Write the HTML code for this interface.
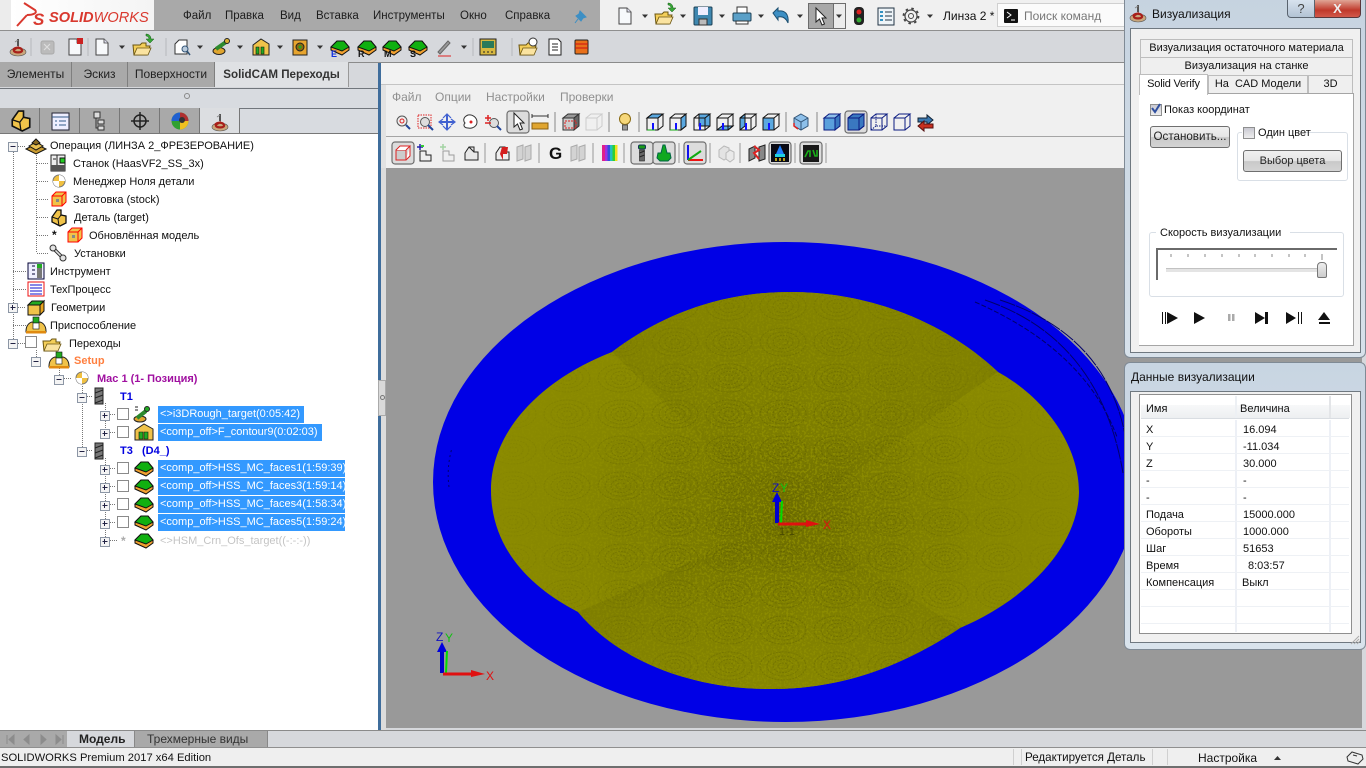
<!DOCTYPE html>
<html><head><meta charset="utf-8"><style>
html,body{margin:0;padding:0;width:1366px;height:768px;overflow:hidden;background:#d6d8dc}
*{box-sizing:border-box}
body{font-family:"Liberation Sans","Noto Sans CJK SC",sans-serif;font-size:11px;color:#111;position:relative}
.b{position:absolute}
.t{position:absolute;white-space:nowrap;line-height:14px;font-size:11px}
.m{font-size:11.5px;color:#1c1c1c}
.g{color:#8f8f8f;font-size:12px}
.hl{position:absolute;background:#3399ff;color:#fff;height:17px;line-height:17px;padding-left:2px;white-space:nowrap;font-size:11px}
.tab{position:absolute;background:#a9a9a9;border-right:1px solid #7f7f7f;top:62px;height:25px;line-height:25px;text-align:center;font-size:12px;color:#222}
.ft{position:absolute;top:108px;height:25px;width:40px;background:#a9a9a9;border-right:1px solid #777}
.btn{position:absolute;border:1px solid #6f6f6f;border-radius:3px;background:linear-gradient(#f0f0f0,#e6e6e6 48%,#c9c9c9 52%,#d4d4d4);text-align:center;font-size:11px;color:#222}
.ptab{position:absolute;background:#efefef;border:1px solid #bdbdbd;border-bottom:0;text-align:center;font-size:11px;white-space:nowrap;color:#111}
.r{position:absolute;left:1141px;width:208px;height:1px;background:#eef1f5}
#ov{position:absolute;left:0;top:0;z-index:20}
.tt{z-index:21}
</style></head><body>

<!-- top menu band -->
<div class="b" style="left:0;top:0;width:600px;height:31px;background:#a9a9a9"></div>
<div class="b" style="left:0;top:0;width:11px;height:31px;background:#ececec"></div>
<div class="b" style="left:11px;top:0;width:143px;height:31px;background:linear-gradient(90deg,#fff,#f4f4f4)"></div>
<div class="b" style="left:600px;top:0;width:530px;height:30px;background:#f0f0f0"></div>
<div class="b" style="left:0;top:30px;width:1366px;height:1px;background:#8f8f8f"></div>
<div class="b" style="left:0;top:31px;width:1366px;height:31px;background:#d6d8dc"></div>
<div class="b" style="left:0;top:62px;width:1366px;height:1px;background:#8b8b8b"></div>

<div class="t" style="left:49px;top:10px;font-size:14.6px;font-weight:bold;font-style:italic;color:#d9382e;line-height:17px;z-index:21">SOLID<span style="font-weight:normal">WORKS</span></div>
<div class="t m" style="left:183px;top:9px">Файл</div>
<div class="t m" style="left:225px;top:9px">Правка</div>
<div class="t m" style="left:280px;top:9px">Вид</div>
<div class="t m" style="left:316px;top:9px">Вставка</div>
<div class="t m" style="left:373px;top:9px">Инструменты</div>
<div class="t m" style="left:460px;top:9px">Окно</div>
<div class="t m" style="left:505px;top:9px">Справка</div>
<div class="t" style="left:943px;top:9px;color:#111;font-size:12px">Линза 2 *</div>
<div class="b" style="left:997px;top:3px;width:130px;height:24px;background:#fbfbfb;border:1px solid #d0d0d0"></div>
<div class="t" style="left:1024px;top:9px;color:#777;font-size:12px">Поиск команд</div>
<div class="b" style="left:808px;top:3px;width:26px;height:26px;background:#a8a8a8;border:1px solid #6c6c6c"></div>
<div class="b" style="left:834px;top:3px;width:12px;height:26px;background:#ececec;border:1px solid #6c6c6c;border-left:0"></div>

<!-- left panel -->
<div class="b" style="left:0;top:63px;width:378px;height:25px;background:#d6d8dc"></div>
<div class="tab" style="left:0;width:72px">Элементы</div>
<div class="tab" style="left:72px;width:56px">Эскиз</div>
<div class="tab" style="left:128px;width:87px">Поверхности</div>
<div class="tab" style="left:215px;width:134px;background:#dfe1e4;font-weight:bold;color:#333;border-right:1px solid #999;font-size:11.6px">SolidCAM Переходы</div>
<div class="b" style="left:0;top:88px;width:378px;height:1px;background:#71767c"></div>
<div class="b" style="left:0;top:89px;width:378px;height:19px;background:#d8dbe0"></div>
<div class="b" style="left:184px;top:93px;width:6px;height:6px;border:1px solid #888;border-radius:50%"></div>
<div class="b" style="left:0;top:108px;width:378px;height:1px;background:#71767c"></div>
<div class="b" style="left:0;top:109px;width:378px;height:24px;background:#d8dbe0"></div>
<div class="ft" style="left:0"></div><div class="ft" style="left:40px"></div><div class="ft" style="left:80px"></div><div class="ft" style="left:120px"></div><div class="ft" style="left:160px"></div>
<div class="ft" style="left:200px;background:#dcdee1"></div>
<div class="b" style="left:0;top:133px;width:378px;height:597px;background:#fff;border-top:1px solid #777"></div>
<div class="b" style="left:378px;top:63px;width:3px;height:667px;background:#3f6d9c"></div>
<div class="b" style="left:378px;top:380px;width:8px;height:36px;background:#d9d9d9;border:1px solid #aaa;z-index:5"></div>
<div class="b" style="left:380px;top:395px;width:5px;height:5px;border:1px solid #777;border-radius:50%;z-index:6"></div>

<!-- view toolbar -->
<div class="b" style="left:381px;top:63px;width:985px;height:22px;background:#f2f2f2;border-bottom:1px solid #c4c4c4"></div>
<div class="b" style="left:381px;top:85px;width:985px;height:83px;background:#f0f0f0;border-left:5px solid #e2e2e2"></div>
<div class="b" style="left:386px;top:136px;width:980px;height:1px;background:#a5a5a5"></div>
<div class="t g" style="left:392px;top:90px">Файл</div>
<div class="t g" style="left:435px;top:90px">Опции</div>
<div class="t g" style="left:486px;top:90px">Настройки</div>
<div class="t g" style="left:560px;top:90px">Проверки</div>

<!-- canvas -->
<div class="b" style="left:381px;top:168px;width:985px;height:577px;background:#d6d8dc;border-left:5px solid #dcdcdc"></div>
<svg class="b" style="left:386px;top:168px" width="976" height="560" viewBox="386 168 976 560">
<defs>
<radialGradient id="y1" gradientUnits="userSpaceOnUse" cx="785" cy="515" r="300" gradientTransform="translate(785 515) scale(1 .72) translate(-785 -515)">
<stop offset="0" stop-color="#6e6e00"/><stop offset=".3" stop-color="#7a7a00"/><stop offset=".7" stop-color="#868600"/><stop offset="1" stop-color="#8b8b00"/></radialGradient>
<linearGradient id="y2" gradientUnits="userSpaceOnUse" x1="0" y1="292" x2="0" y2="520"><stop offset="0" stop-color="#848400"/><stop offset=".6" stop-color="#7d7d00"/><stop offset="1" stop-color="#6c6c00"/></linearGradient>
<linearGradient id="y3" gradientUnits="userSpaceOnUse" x1="0" y1="520" x2="0" y2="689"><stop offset="0" stop-color="#6c6c00"/><stop offset=".4" stop-color="#7c7c00"/><stop offset="1" stop-color="#868600"/></linearGradient>
<radialGradient id="fade" gradientUnits="userSpaceOnUse" cx="785" cy="515" r="300"><stop offset="0" stop-color="#fff" stop-opacity="1"/><stop offset=".55" stop-color="#fff" stop-opacity=".5"/><stop offset="1" stop-color="#fff" stop-opacity=".08"/></radialGradient>
<mask id="mk" maskUnits="userSpaceOnUse" x="486" y="288" width="600" height="405"><rect x="486" y="288" width="600" height="405" fill="url(#fade)"/></mask>
<clipPath id="yc"><path d="M612 352C665 312 725 292 790 292C870 292 945 322 998 372C1045 398 1079 445 1079 492C1078 545 1030 598 960 628C900 668 840 689 770 689C690 689 618 660 578 612C520 582 491 540 491 490C491 432 540 380 612 352Z"/></clipPath>
<pattern id="ros" patternUnits="userSpaceOnUse" width="54" height="36"><g fill="none" stroke="#5c5c00" stroke-width="1" stroke-dasharray="2 1"><ellipse cx="27" cy="18" rx="5" ry="3"/><ellipse cx="27" cy="18" rx="10" ry="6.500"/><ellipse cx="27" cy="18" rx="16" ry="10"/><ellipse cx="27" cy="18" rx="23" ry="14"/></g></pattern>
<filter id="nz" x="0" y="0" width="100%" height="100%"><feTurbulence type="fractalNoise" baseFrequency=".45" numOctaves="2" seed="4"/><feColorMatrix values="0 0 0 0 .36 0 0 0 0 .36 0 0 0 0 0 0 0 0 7 -3.400"/></filter>
</defs>
<rect x="386" y="168" width="976" height="560" fill="#999"/>
<ellipse cx="785.500" cy="482" rx="352.500" ry="240" fill="#0000e6"/>
<g fill="none" stroke="#00006a" stroke-width="1" stroke-dasharray="16 1">
<path d="M985 300Q1100 339 1123 473"/><path d="M1000 300Q1108 335 1126 440"/><path d="M975 302Q1085 350 1117 437" stroke-dasharray="5 2"/>
<path d="M449 487C447 472 449 458 452 448" stroke-dasharray="2 3"/>
</g>
<path d="M612 352C665 312 725 292 790 292C870 292 945 322 998 372C1045 398 1079 445 1079 492C1078 545 1030 598 960 628C900 668 840 689 770 689C690 689 618 660 578 612C520 582 491 540 491 490C491 432 540 380 612 352Z" fill="url(#y1)"/>
<path d="M612 352C665 312 725 292 790 292C870 292 945 322 998 372L785 520Z" fill="url(#y2)"/>
<path d="M578 612C618 660 690 689 770 689C840 689 900 668 960 628L785 520Z" fill="url(#y3)"/>
<g clip-path="url(#yc)"><g mask="url(#mk)"><rect x="486" y="288" width="600" height="405" filter="url(#nz)" opacity=".55"/><rect x="486" y="288" width="600" height="405" fill="url(#ros)" opacity=".65"/></g></g>
</svg>

<!-- bottom -->
<div class="b" style="left:0;top:730px;width:1366px;height:1px;background:#8a8a8a"></div>
<div class="b" style="left:0;top:731px;width:1366px;height:16px;background:#d6d8dc"></div>
<div class="b" style="left:0;top:731px;width:67px;height:16px;background:#a9a9a9"></div>
<div class="t" style="left:79px;top:732px;font-size:12px;font-weight:bold;color:#222">Модель</div>
<div class="b" style="left:134px;top:731px;width:134px;height:16px;background:#a9a9a9;border-left:1px solid #888;border-right:1px solid #888"></div>
<div class="t" style="left:147px;top:732px;font-size:12px;color:#333">Трехмерные виды</div>
<div class="b" style="left:0;top:747px;width:1366px;height:1px;background:#8f8f8f"></div>
<div class="b" style="left:0;top:748px;width:1366px;height:18px;background:#efefef"></div>
<div class="b" style="left:0;top:766px;width:1366px;height:2px;background:#6e6e6e"></div>
<div class="t" style="left:1px;top:751px;font-size:11.2px">SOLIDWORKS Premium 2017 x64 Edition</div>
<div class="t" style="left:1025px;top:751px;font-size:11.6px">Редактируется Деталь</div>
<div class="t" style="left:1198px;top:751px;font-size:12px">Настройка</div>
<div class="b" style="left:1013px;top:749px;width:1px;height:16px;background:#d0d0d0"></div>
<div class="b" style="left:1021px;top:749px;width:1px;height:16px;background:#d0d0d0"></div>
<div class="b" style="left:1152px;top:749px;width:1px;height:16px;background:#d0d0d0"></div>
<div class="b" style="left:1167px;top:749px;width:1px;height:16px;background:#d0d0d0"></div>

<!-- tree text -->
<div class="t" style="left:50px;top:139px">Операция (ЛИНЗА 2_ФРЕЗЕРОВАНИЕ)</div>
<div class="t" style="left:73px;top:157px">Станок (HaasVF2_SS_3x)</div>
<div class="t" style="left:73px;top:175px">Менеджер Ноля детали</div>
<div class="t" style="left:73px;top:193px">Заготовка (stock)</div>
<div class="t" style="left:74px;top:211px">Деталь (target)</div>
<div class="t" style="left:89px;top:229px">Обновлённая модель</div>
<div class="t" style="left:52px;top:228px;font-weight:bold;font-size:12px">*</div>
<div class="t" style="left:74px;top:247px">Установки</div>
<div class="t" style="left:50px;top:265px">Инструмент</div>
<div class="t" style="left:50px;top:283px">ТехПроцесс</div>
<div class="t" style="left:51px;top:301px">Геометрии</div>
<div class="t" style="left:50px;top:319px">Приспособление</div>
<div class="t" style="left:69px;top:337px">Переходы</div>
<div class="t" style="left:74px;top:354px;font-weight:bold;color:#ff7f3f">Setup</div>
<div class="t" style="left:97px;top:372px;font-weight:bold;color:#a010a0">Mac 1 (1- Позиция)</div>
<div class="t" style="left:120px;top:390px;font-weight:bold;color:#0000e0">T1</div>
<div class="t" style="left:120px;top:444px;font-weight:bold;color:#0000e0">T3&nbsp;&nbsp;&nbsp;(D4_)</div>
<div class="hl" style="left:158px;top:406px;width:146px">&lt;&gt;i3DRough_target(0:05:42)</div>
<div class="hl" style="left:158px;top:424px;width:164px">&lt;comp_off&gt;F_contour9(0:02:03)</div>
<div class="hl" style="left:158px;top:460px;width:187px">&lt;comp_off&gt;HSS_MC_faces1(1:59:39)</div>
<div class="hl" style="left:158px;top:478px;width:187px">&lt;comp_off&gt;HSS_MC_faces3(1:59:14)</div>
<div class="hl" style="left:158px;top:496px;width:187px">&lt;comp_off&gt;HSS_MC_faces4(1:58:34)</div>
<div class="hl" style="left:158px;top:514px;width:187px">&lt;comp_off&gt;HSS_MC_faces5(1:59:24)</div>
<div class="t" style="left:160px;top:534px;color:#c4c4c4">&lt;&gt;HSM_Crn_Ofs_target((-:-:-))</div>
<div class="t" style="left:121px;top:534px;color:#aaa;font-weight:bold;font-size:12px">*</div>

<!-- window 1 -->
<div class="b" style="left:1124px;top:-6px;width:242px;height:364px;background:linear-gradient(#c6d3e0,#d7e1ea);border:1px solid #7f8a95;border-radius:6px;z-index:10"></div>
<div class="b" style="left:1130px;top:28px;width:231px;height:325px;background:#f0f0f0;border:1px solid #6f7880;z-index:10"></div>
<div class="b" style="left:1139px;top:93px;width:215px;height:253px;background:#fff;border:1px solid #a5a5a5;border-left:0;z-index:10"></div>
<div class="t tt" style="left:1152px;top:7px;font-size:12px">Визуализация</div>
<div class="b" style="left:1287px;top:0;width:28px;height:18px;background:linear-gradient(#d7e2ee,#b3c3d4);border:1px solid #59636e;border-top:0;border-radius:0 0 0 4px;z-index:11;text-align:center;font-size:13px;color:#444;line-height:17px">?</div>
<div class="b" style="left:1315px;top:0;width:46px;height:18px;background:linear-gradient(#e0a595,#c0392b 60%,#d2584a);border:1px solid #59363a;border-top:0;border-left:0;border-radius:0 0 4px 0;z-index:11;text-align:center;font-size:13px;font-weight:bold;color:#eee;line-height:17px">X</div>
<div class="ptab" style="left:1140px;top:39px;width:213px;height:18px;line-height:16px;z-index:11">Визуализация остаточного материала</div>
<div class="ptab" style="left:1140px;top:57px;width:213px;height:18px;line-height:16px;z-index:11">Визуализация на станке</div>
<div class="ptab" style="left:1208px;top:75px;width:100px;height:18px;line-height:16px;z-index:11">На&nbsp; CAD Модели</div>
<div class="ptab" style="left:1308px;top:75px;width:45px;height:18px;line-height:16px;z-index:11">3D</div>
<div class="ptab" style="left:1139px;top:74px;width:69px;height:21px;line-height:18px;background:#fff;z-index:12;letter-spacing:-.2px">Solid Verify</div>
<div class="b" style="left:1150px;top:104px;width:12px;height:12px;background:linear-gradient(#c9c9d2,#eee);border:1px solid #8e8f8f;z-index:11"></div>
<div class="t tt" style="left:1164px;top:103px">Показ координат</div>
<div class="btn" style="left:1150px;top:126px;width:80px;height:22px;line-height:20px;z-index:11;font-size:11.6px">Остановить...</div>
<div class="b" style="left:1237px;top:132px;width:111px;height:49px;border:1px solid #d9dfe6;border-radius:3px;z-index:11"></div>
<div class="b" style="left:1242px;top:128px;width:64px;height:12px;background:#fff;z-index:11"></div>
<div class="b" style="left:1243px;top:127px;width:12px;height:12px;background:linear-gradient(#c9c9d2,#eee);border:1px solid #8e8f8f;z-index:12"></div>
<div class="t tt" style="left:1258px;top:126px">Один цвет</div>
<div class="btn" style="left:1243px;top:150px;width:99px;height:22px;line-height:20px;z-index:11">Выбор цвета</div>
<div class="b" style="left:1149px;top:232px;width:195px;height:65px;border:1px solid #d9dfe6;border-radius:3px;z-index:11"></div>
<div class="b" style="left:1156px;top:226px;width:134px;height:12px;background:#fff;z-index:11"></div>
<div class="t tt" style="left:1160px;top:226px">Скорость визуализации</div>
<div class="b" style="left:1156px;top:248px;width:181px;height:32px;border-left:2px solid #6a6a6a;border-top:2px solid #6a6a6a;background:#fff;z-index:11"></div>
<div class="b" style="left:1166px;top:268px;width:158px;height:4px;background:#e4e4e4;border-top:1px solid #c2c2c2;z-index:11"></div>
<div class="b" style="left:1317px;top:262px;width:10px;height:16px;background:linear-gradient(#eee,#ccc);border:1px solid #777;border-radius:4px 4px 2px 2px;z-index:12"></div>

<!-- window 2 -->
<div class="b" style="left:1124px;top:362px;width:242px;height:288px;background:linear-gradient(#c8d5e2,#d9e3ec);border:1px solid #7f8a95;border-radius:6px;z-index:10"></div>
<div class="b" style="left:1130px;top:391px;width:231px;height:252px;background:#f0f0f0;border:1px solid #6f7880;z-index:10"></div>
<div class="b" style="left:1139px;top:394px;width:213px;height:240px;background:#fff;border:1px solid #8f8f8f;z-index:10"></div>
<div class="b" style="left:1141px;top:405px;width:209px;height:13px;background:linear-gradient(#f7f8f9,#edeff1);z-index:11"></div>
<div class="b" style="left:1235px;top:396px;width:2px;height:22px;background:#edf0f4;z-index:11"></div>
<div class="b" style="left:1329px;top:396px;width:2px;height:22px;background:#e3e5e8;z-index:11"></div>
<div class="b" style="left:1235px;top:420px;width:2px;height:212px;background:#edf0f6;z-index:11"></div>
<div class="b" style="left:1329px;top:420px;width:2px;height:212px;background:#edf0f6;z-index:11"></div>
<div class="r" style="top:418px;background:#d9dde2;z-index:11"></div>
<div class="r" style="top:436px;z-index:11"></div><div class="r" style="top:453px;z-index:11"></div><div class="r" style="top:470px;z-index:11"></div><div class="r" style="top:487px;z-index:11"></div><div class="r" style="top:504px;z-index:11"></div><div class="r" style="top:521px;z-index:11"></div><div class="r" style="top:538px;z-index:11"></div><div class="r" style="top:555px;z-index:11"></div><div class="r" style="top:572px;z-index:11"></div><div class="r" style="top:589px;z-index:11"></div><div class="r" style="top:606px;z-index:11"></div><div class="r" style="top:623px;z-index:11"></div>
<div class="t tt" style="left:1131px;top:370px;font-size:12px">Данные визуализации</div>
<div class="t tt" style="left:1146px;top:402px">Имя</div><div class="t tt" style="left:1240px;top:402px">Величина</div>
<div class="t tt" style="left:1146px;top:423px">X</div><div class="t tt" style="left:1243px;top:423px">16.094</div>
<div class="t tt" style="left:1146px;top:440px">Y</div><div class="t tt" style="left:1243px;top:440px">-11.034</div>
<div class="t tt" style="left:1146px;top:457px">Z</div><div class="t tt" style="left:1243px;top:457px">30.000</div>
<div class="t tt" style="left:1146px;top:474px">-</div><div class="t tt" style="left:1243px;top:474px">-</div>
<div class="t tt" style="left:1146px;top:491px">-</div><div class="t tt" style="left:1243px;top:491px">-</div>
<div class="t tt" style="left:1146px;top:508px">Подача</div><div class="t tt" style="left:1243px;top:508px">15000.000</div>
<div class="t tt" style="left:1146px;top:525px">Обороты</div><div class="t tt" style="left:1243px;top:525px">1000.000</div>
<div class="t tt" style="left:1146px;top:542px">Шаг</div><div class="t tt" style="left:1243px;top:542px">51653</div>
<div class="t tt" style="left:1146px;top:559px">Время</div><div class="t tt" style="left:1248px;top:559px">8:03:57</div>
<div class="t tt" style="left:1146px;top:576px">Компенсация</div><div class="t tt" style="left:1242px;top:576px">Выкл</div>

<!-- icon overlay -->
<svg id="ov" width="1366" height="768" viewBox="0 0 1366 768" xmlns="http://www.w3.org/2000/svg">
<defs>
<path id="caret" d="M-3-1.500h6L0 2z" fill="#333"/>
<g id="sc"><ellipse cx="0" cy="5" rx="8" ry="4" fill="#c9a77c" stroke="#555" stroke-width=".6"/><path d="M-5 3c2-3 8-3 9 0s-7 3-8 1 5-4 5-4" fill="none" stroke="#a8201a" stroke-width="2.200"/><path d="M-1-8h2v7h-2z" fill="#555"/><path d="M-3-5l3-2" stroke="#888" stroke-width="1"/></g>
<g id="doc"><path d="M-6-8h8l4 4V8H-6z" fill="#f7f9fb" stroke="#444" stroke-width="1"/><path d="M2-8v4h4" fill="#dde" stroke="#444" stroke-width=".8"/></g>
<g id="fold"><path d="M-9-3h7l2-2h4v3H8L5 7H-8z" fill="#f4cf5a" stroke="#6a5410" stroke-width="1"/><path d="M-8 7l3-7H9L6 7z" fill="#fae3a0" stroke="#6a5410" stroke-width=".8"/></g>
<path id="garr" d="M0-8c3 0 5 2 5 5h3l-4 4-4-4h3c0-1-1-3-3-3z" fill="#37a537" stroke="#165c16" stroke-width=".5"/>
<g id="ptr"><path d="M-4-9V5l3.500-3 2.500 6 2.500-1-2.500-6H6z" fill="#fff" stroke="#222" stroke-width="1"/></g>
<g id="wire" fill="none" stroke-width="1"><path d="M-8-4H3V8H-8zM-8-4l5-4H8L3-4M3 8l5-4V-8"/></g>
<g id="sol"><path d="M-7-1l5-7h4v5l5 1v7L1 8-7 4z" fill="#f0c34a" stroke="#111" stroke-width="1.300"/><path d="M-7-1l6 2 1 7M-1 1l3-4 5 1" fill="none" stroke="#111"/></g>
<g id="grn"><path d="M-9 0L-3-6 4-6 9 0 9 3 2 8-9 3z" fill="#f0a030" stroke="#111" stroke-width="1"/><path d="M-9 0L-3-6 4-6 9 0 2 4z" fill="#10b010" stroke="#111" stroke-width="1"/></g>
<g id="cb"><rect x="-5.500" y="-5.500" width="11" height="11" fill="#fff" stroke="#8a8a8a"/></g>
<g id="minus"><rect x="-4.500" y="-4.500" width="9" height="9" fill="#f4f4f4" stroke="#8c96a5"/><path d="M-2.500-.5h5" stroke="#224"/></g>
<g id="plus"><rect x="-4.500" y="-4.500" width="9" height="9" fill="#f4f4f4" stroke="#8c96a5"/><path d="M-2.500-.5h5M-.5-3v5" stroke="#224"/></g>
<g id="stk"><path d="M-7-3L-3-7H7V3L3 7H-7z" fill="#f0c34a" stroke="#f00" stroke-width="1"/><path d="M-7-3H3V7M3-3L7-7" fill="none" stroke="#f00"/><rect x="-3" y="0" width="3" height="3" fill="#888"/></g>
<g id="wp"><circle r="6" fill="#f0c040" stroke="#777"/><path d="M-6 0A6 6 0 0 0 0 6V-6A6 6 0 0 1 6 0z" fill="#fff"/></g>
<g id="hat"><path d="M-10 7h20v-1c0-5-3-9-7-9h-6c-4 0-7 4-7 9z" fill="#f0c34a" stroke="#222"/><rect x="-3" y="-8" width="6" height="6" fill="#22aa22" stroke="#111" stroke-width=".6"/><rect x="-3" y="-2" width="6" height="6" fill="#fff" stroke="#111" stroke-width=".6"/><rect x="-10" y="6" width="20" height="2.500" fill="#e08a10"/></g>
<g id="tool"><rect x="-4" y="-8" width="8" height="16" fill="#777" stroke="#222"/><path d="M-4-3l8-3M-4 2l8-3M-4 7l8-3" stroke="#222"/></g>
<g id="btn"><rect x="-11" y="-11" width="22" height="22" rx="3" fill="#dcdcdc" stroke="#6f6f6f" stroke-width="1.200"/></g>
</defs>

<!-- logo -->
<g fill="none" stroke="#d9382e" stroke-width="2"><path d="M24 3l11 7c3 3-2 5-8 5"/><path d="M17 26l10-11"/></g>
<text x="33" y="25" font-family="Liberation Sans" font-size="17" font-weight="bold" font-style="italic" fill="#d9382e">S</text>

<!-- pin -->
<g transform="translate(582,17)"><path d="M-2-6l6 6-3 1-2 3-5-5 3-2zM-4 2l-3 4" fill="#3d8fc4" stroke="#3d8fc4" stroke-width="1"/></g>

<!-- top right icons -->
<use href="#doc" x="625" y="16"/><use href="#caret" x="645" y="16"/>
<use href="#fold" x="664" y="17"/><use href="#garr" x="668" y="11"/><use href="#caret" x="683" y="16"/>
<g transform="translate(703,16)"><rect x="-9" y="-9" width="18" height="18" rx="1" fill="#3f88b0" stroke="#1c3f55"/><rect x="-5" y="-9" width="10" height="8" fill="#eef"/><rect x="-4" y="3" width="8" height="6" fill="#bbb" stroke="#333"/></g><use href="#caret" x="722" y="16"/>
<g transform="translate(742,16)"><rect x="-5" y="-9" width="10" height="6" fill="#fff" stroke="#333"/><rect x="-9" y="-3" width="18" height="8" rx="1" fill="#5aa0c8" stroke="#1c3f55"/><rect x="-6" y="5" width="12" height="3" fill="#fff" stroke="#333"/></g><use href="#caret" x="761" y="16"/>
<g transform="translate(781,16)"><path d="M-8-3l5-5v3c7-1 11 3 10 12-2-5-5-7-10-6v3z" fill="#3d8fc4" stroke="#1c4f70"/></g><use href="#caret" x="800" y="16"/>
<use href="#ptr" x="820" y="17"/><use href="#caret" x="839" y="16"/>
<g transform="translate(859,16)"><rect x="-5" y="-9" width="10" height="18" rx="4" fill="#222"/><circle cy="-4" r="2.500" fill="#d22"/><circle cy="4" r="2.500" fill="#3a3"/></g>
<g transform="translate(886,16)"><rect x="-8" y="-8" width="16" height="17" fill="#eef4f8" stroke="#234"/><path d="M-6-4h3M-6 0h3M-6 4h3" stroke="#3090c0" stroke-width="2"/><path d="M-1-4h7M-1 0h7M-1 4h7" stroke="#234"/></g>
<g transform="translate(911,16)"><circle r="6" fill="none" stroke="#444" stroke-width="1.200"/><circle r="2.500" fill="none" stroke="#444"/><circle r="7.500" fill="none" stroke="#444" stroke-width="1.800" stroke-dasharray="2.500 3.400"/></g><use href="#caret" x="930" y="16"/>
<g transform="translate(1011,16)"><rect x="-7" y="-7" width="14" height="14" fill="#111" rx="1"/><path d="M-4-4l4 3-4 3M0 4h4" stroke="#fff" fill="none"/></g>

<!-- row 2 -->
<use href="#sc" x="18" y="47"/>
<rect x="41" y="41" width="13" height="13" rx="2" fill="#bbb" stroke="#aaa"/><path d="M44 44l6 6m0-6l-6 6" stroke="#ddd" stroke-width="1.200"/>
<path d="M31 38v18M88 38v18M166 38v18M473 38v18M512 38v18" stroke="#b5b7bb"/>
<use href="#doc" x="75" y="47"/><rect x="77" y="38" width="6" height="6" fill="#c22"/>
<use href="#doc" x="102" y="47"/><use href="#caret" x="122" y="47"/>
<use href="#fold" x="142" y="48"/><use href="#garr" x="146" y="42"/>
<g transform="translate(181,47)"><path d="M-6-3L-2-7H6V7H-6z" fill="#fff" stroke="#333"/><circle cx="4" cy="2" r="3" fill="#bcd" stroke="#357"/><path d="M6 4l3 4" stroke="#357" stroke-width="1.500"/></g><use href="#caret" x="200" y="47"/>
<g transform="translate(221,47)"><ellipse cx="-2" cy="4" rx="6" ry="3.500" fill="#e0a52f" stroke="#222"/><path d="M-5 2L5-5" stroke="#2d8a2d" stroke-width="4"/><circle cx="6" cy="-6" r="2.500" fill="#d9b030" stroke="#222"/></g><use href="#caret" x="240" y="47"/>
<g transform="translate(261,47)"><path d="M-8-2L0-8 8-3V8H-8z" fill="#f0c34a" stroke="#222"/><path d="M-5 7V0h3v7zM0 7V0h3v7z" fill="#22aa22" stroke="#111" stroke-width=".6"/></g><use href="#caret" x="280" y="47"/>
<g transform="translate(300,47)"><rect x="-7" y="-7" width="14" height="15" fill="#e8a52f" stroke="#222"/><circle r="4" fill="#8a6a10" stroke="#222"/><circle r="1.500" fill="#2a2"/></g><use href="#caret" x="320" y="47"/>
<use href="#grn" x="340" y="47"/><use href="#grn" x="367" y="47"/><use href="#grn" x="392" y="47"/><use href="#grn" x="418" y="47"/>
<g font-family="Liberation Sans" font-size="9" font-weight="bold"><text x="331" y="57" fill="#1030e0">E</text><text x="358" y="57" fill="#111">R</text><text x="384" y="57" fill="#111">M</text><text x="410" y="57" fill="#111">S</text></g>
<path d="M438 52l10-11 2 2-10 11z" fill="#999" stroke="#666"/><path d="M438 56h13" stroke="#d22"/><use href="#caret" x="464" y="47"/>
<g transform="translate(488,47)"><rect x="-8" y="-8" width="16" height="16" fill="#d8b840" stroke="#222"/><rect x="-6" y="-6" width="12" height="7" fill="#2a7a5a"/><path d="M-5 5h2M-1 5h2M3 5h2" stroke="#222"/></g>
<use href="#fold" x="528" y="48"/><circle cx="533" cy="42" r="4" fill="#fff" stroke="#333"/>
<g transform="translate(555,47)"><path d="M-6-8h9l3 3V8H-6z" fill="#fff" stroke="#222"/><path d="M-3-3h6M-3 0h6M-3 3h6" stroke="#222"/></g>
<g transform="translate(581,47)"><rect x="-6" y="-7" width="13" height="14" rx="1" fill="#e8701a" stroke="#222"/><path d="M-6-3h13M-6 1h13" stroke="#c11"/></g>

<!-- FM tabs -->
<g transform="translate(21,121) scale(1.250)"><use href="#sol"/></g>
<g transform="translate(60,121)"><rect x="-8" y="-8" width="17" height="17" fill="#eef" stroke="#223"/><path d="M-8-4h17M-5 0h2M-5 4h2M-1 0h7M-1 4h7" stroke="#335a8a"/></g>
<g transform="translate(100,121)" fill="#ddd" stroke="#333"><rect x="-6" y="-9" width="6" height="6"/><rect x="-2" y="-1" width="6" height="4"/><rect x="-2" y="5" width="6" height="4"/><path d="M-4-3V7h2" fill="none"/></g>
<g transform="translate(140,121)" fill="none" stroke="#222" stroke-width="1.500"><circle r="6"/><path d="M-9 0H9M0-9V9"/></g>
<g transform="translate(180,121)"><circle r="8.500" fill="#30a030"/><path d="M0-8.500A8.500 8.500 0 0 1 8.500 0H0z" fill="#b03030"/><path d="M-8.500 0A8.500 8.500 0 0 1 0-8.500V0z" fill="#2060d0"/><path d="M0 0h8.500A8.500 8.500 0 0 1 0 8.500z" fill="#f0c020"/><circle cx="2" cy="-1" r="3" fill="#333"/></g>
<use href="#sc" x="220" y="122"/>

<!-- view toolbar row 1 -->
<g transform="translate(403,122)"><circle cx="-1" cy="-1" r="5" fill="#eee" stroke="#555"/><circle cx="-1" cy="-1" r="2" fill="none" stroke="#d22"/><path d="M3 3l4 4" stroke="#22459a" stroke-width="2"/></g>
<g transform="translate(425,122)"><rect x="-7" y="-7" width="13" height="13" fill="none" stroke="#d22" stroke-dasharray="1.500 1"/><circle r="4.500" fill="#ddd" stroke="#555"/><path d="M3 3l5 5" stroke="#22459a" stroke-width="2"/></g>
<g transform="translate(447,122)" fill="none" stroke="#4060d0" stroke-width="2"><path d="M-7 0H7M0-7V7"/><path d="M-4-4L0-8 4-4M-4 4L0 8 4 4M-4-3L-8 0-4 3M4-3L8 0 4 3" stroke-width="1.200"/></g>
<g transform="translate(471,122)" fill="#fff" stroke="#333"><path d="M-3-7c5-1 9 3 9 7s-4 7-9 6c-4 0-5-3-3-5-2-2-2-6 3-8z"/><circle r="1" fill="#d22" stroke="#d22"/></g>
<g transform="translate(493,122)"><circle cx="1" cy="1" r="4.500" fill="#ddd" stroke="#555"/><path d="M-8-4h6M-5-7v6M-8 1h6" stroke="#d22" stroke-width="1.500"/><path d="M4 4l4 4" stroke="#22459a" stroke-width="2"/></g>
<use href="#btn" x="518" y="122"/><use href="#ptr" x="518" y="122"/>
<g transform="translate(540,122)"><rect x="-8" y="1" width="16" height="6" fill="#e0a52f" stroke="#8a6010"/><path d="M-8-6H8M-8-8v4M8-8v4" stroke="#333"/></g>
<path d="M555 112v20M609 112v20M639 112v20M786 112v20M817 112v20" stroke="#888"/>
<g transform="translate(571,122)"><path d="M-8-4l5-4H8L3-4z" fill="#999" stroke="#333"/><path d="M3-4L8-8V4L3 8z" fill="#666" stroke="#333"/><path d="M-8-4H3V8H-8z" fill="#ccc" stroke="#333"/><rect x="-6" y="-1" width="11" height="7" fill="none" stroke="#d22" stroke-dasharray="2 1"/></g>
<g transform="translate(594,122)" stroke="#ccc"><use href="#wire"/></g>
<g transform="translate(625,122)"><circle cy="-3" r="5.500" fill="#f6d77a" stroke="#8a6a10"/><rect x="-2.500" y="3" width="5" height="5" fill="#999" stroke="#555"/></g>
<g stroke="#111">
<g transform="translate(655,122)"><path d="M-8-4l5-4H8L3-4z" fill="#5aa8e0"/><use href="#wire"/><path d="M-2 8V1" stroke="#11f" stroke-width="2"/><path d="M-8 8H0" stroke="#1a1"/></g>
<g transform="translate(678,122)"><path d="M3-4L8-8V4L3 8z" fill="#5aa8e0"/><use href="#wire"/><path d="M-2 8V1" stroke="#11f" stroke-width="2"/><path d="M-8 8H0" stroke="#1a1"/></g>
<g transform="translate(702,122)"><path d="M-3-8H8V4H-3z" fill="#5aa8e0"/><use href="#wire"/><path d="M-2 8V1" stroke="#11f" stroke-width="2"/></g>
<g transform="translate(725,122)"><path d="M-8 8l5-4H8L3 8z" fill="#5aa8e0"/><use href="#wire"/><path d="M-2 8V1" stroke="#11f" stroke-width="2"/></g>
<g transform="translate(748,122)"><path d="M-8-4l5-4V4L-8 8z" fill="#5aa8e0"/><use href="#wire"/><path d="M-2 8V1" stroke="#11f" stroke-width="2"/></g>
<g transform="translate(771,122)"><path d="M-8-4H3V8H-8z" fill="#5aa8e0"/><use href="#wire"/><path d="M-2 8V1" stroke="#11f" stroke-width="2"/></g>
</g>
<g transform="translate(801,122)"><path d="M0-8l7 4v8l-7 4-7-4v-8z" fill="#8ec0ea" stroke="#357"/><path d="M-7-4l7 4 7-4M0 0v8" stroke="#357" fill="none"/><path d="M-7 1v3l4 3" stroke="#d22" stroke-width="1.500" fill="none"/></g>
<g transform="translate(832,122)" stroke="#0a1a80"><path d="M-8-4l5-4H8L3-4z" fill="#8ec0ea"/><path d="M3-4L8-8V4L3 8z" fill="#3a78c0"/><path d="M-8-4H3V8H-8z" fill="#5aa0dc"/></g>
<use href="#btn" x="856" y="122"/>
<g transform="translate(856,122)" stroke="#0a1a80"><path d="M-8-4l5-4H8V4L3 8H-8z" fill="#3a78c0"/><use href="#wire"/></g>
<g transform="translate(879,122)" stroke="#0a1a80"><use href="#wire"/><path d="M-3-8V4H8M-8 8l5-4" fill="none" stroke-dasharray="1.500 1"/></g>
<g transform="translate(902,122)" stroke="#0a1a80"><use href="#wire"/></g>
<g transform="translate(925,122)"><path d="M-7-4h9v-3l6 5-6 5V0h-9z" fill="#3a78b0" stroke="#123"/><path d="M8 2H-1v-3l-6 5 6 5V6h9z" fill="#c83020" stroke="#511"/></g>

<!-- view toolbar row 2 -->
<path d="M485 143v20M539 143v20M593 143v20M624 143v20M679 143v20M710 143v20M740 143v20M795 143v20M826 143v20" stroke="#999"/>
<use href="#btn" x="403" y="153"/><g transform="translate(403,153)"><path d="M-7-3H3V7H-7z" fill="#ccc" stroke="#d22"/><path d="M-7-3l4-4H7L3-3M3 7l4-4V-7" fill="#fff" stroke="#d22"/></g>
<g transform="translate(425,153)"><path d="M-5-2h6v4h5v6H-5z" fill="#eee" stroke="#222"/><path d="M-8-6h6M-5-9v6" stroke="#22a" stroke-width="1.500"/><path d="M-4-7h3" stroke="#3c3" stroke-width="2"/></g>
<g transform="translate(448,153)" opacity=".4"><path d="M-5-2h6v4h5v6H-5z" fill="#eee" stroke="#222"/><path d="M-8-6h6M-5-9v6" stroke="#3a3" stroke-width="1.500"/></g>
<g transform="translate(471,153)"><path d="M-6 0l4-6h5v5h4v8H-6z" fill="#e8e8e8" stroke="#222"/><path d="M-2-6L3-1" stroke="#222"/></g>
<g transform="translate(502,153)"><path d="M-6 0l4-6h5v5h4v8H-6z" fill="#eee" stroke="#222"/><path d="M-2 1l2-7h6L5 1H1V7z" fill="#d41e1e"/></g>
<g transform="translate(525,153)" opacity=".4"><path d="M-8-6l6-2V6l-6 2zM0-6l6-2V6L0 8z" fill="#aaa" stroke="#444"/></g>
<text x="549" y="159" font-family="Liberation Sans" font-size="17" font-weight="bold" fill="#111">G</text>
<g transform="translate(579,153)" opacity=".4"><path d="M-8-6l6-2V6l-6 2zM0-6l6-2V6L0 8z" fill="#aaa" stroke="#444"/></g>
<g transform="translate(602,145)"><rect x="0" y="0" width="3" height="16" fill="#e0208a"/><rect x="3" y="0" width="2.500" height="16" fill="#a030e0"/><rect x="5.500" y="0" width="2.500" height="16" fill="#3050e0"/><rect x="8" y="0" width="2.500" height="16" fill="#20c0c0"/><rect x="10.500" y="0" width="2.500" height="16" fill="#30d030"/><rect x="13" y="0" width="2.500" height="16" fill="#f0e020"/></g>
<use href="#btn" x="642" y="153"/><g transform="translate(642,153)"><rect x="-2.500" y="-3" width="5" height="11" fill="#666" stroke="#222" stroke-width=".6"/><path d="M-2.500 0l5-2M-2.500 4l5-2" stroke="#222"/><rect x="-3.500" y="-8" width="7" height="4" rx="1.500" fill="#1a9a1a" stroke="#135"/></g>
<use href="#btn" x="664" y="153"/><g transform="translate(664,153)"><path d="M-1-8h2l2 8h3l1 5-3 3h-8l-3-3 1-5h3z" fill="#10a820" stroke="#064"/></g>
<use href="#btn" x="695" y="153"/><g transform="translate(695,153)"><path d="M-7-8V7" stroke="#11e" stroke-width="2"/><path d="M-7 7H8" stroke="#e11" stroke-width="2"/><path d="M-7 7L6-2" stroke="#1a1" stroke-width="2"/></g>
<g transform="translate(726,153)" opacity=".35"><path d="M-7-3l5-4 5 2v9l-5 3-5-3z" fill="#ccc" stroke="#555"/><path d="M0 0l4-3 4 2v7l-4 3-4-3z" fill="#ddd" stroke="#555"/></g>
<g transform="translate(757,153)"><path d="M-8-4l6-3V5l-6 3zM2-6l6-2V6L2 8z" fill="#888" stroke="#222"/><path d="M-3-7l5 4-5 3 5 6" fill="none" stroke="#d22" stroke-width="2"/></g>
<use href="#btn" x="780" y="153"/><rect x="771" y="144" width="18" height="18" fill="#0a0a14"/><path d="M780 145l4 9h-8z" fill="#2080ff"/><rect x="775" y="154" width="10" height="3" fill="#20d0e0"/><path d="M776 158v3M780 158v3M784 158v3" stroke="#f0d020" stroke-width="1.500"/>
<use href="#btn" x="811" y="153"/><rect x="803" y="145" width="16" height="17" fill="#191919"/><path d="M805 157l3-6h2v6M813 150l2 6h2v-6" fill="none" stroke="#18b018" stroke-width="1.600"/>

<!-- tree lines -->
<g stroke="#777" stroke-dasharray="1 1" fill="none">
<path d="M13.500 152V343M18 146.500h8M36.500 153V253M37 163.500h11M37 181.500h11M37 199.500h11M37 217.500h11M37 235.500h11M37 253.500h11M13 271.500h13M13 289.500h13M18 307.500h8M13 325.500h13M18 343.500h8M36.500 350V361M59.500 368V379M82.500 386V451M105.500 403V433M105.500 458V541M110 414.500h6M110 432.500h6M110 468.500h6M110 486.500h6M110 504.500h6M110 522.500h6M110 540.500h8M64 378.500h8M87 396.500h6M87 450.500h6"/>
</g>
<use href="#minus" x="13" y="147"/><use href="#plus" x="13" y="308"/><use href="#minus" x="13" y="344"/><use href="#minus" x="36" y="362"/><use href="#minus" x="59" y="380"/><use href="#minus" x="82" y="398"/><use href="#minus" x="82" y="452"/>
<use href="#plus" x="105" y="416"/><use href="#plus" x="105" y="434"/><use href="#plus" x="105" y="470"/><use href="#plus" x="105" y="488"/><use href="#plus" x="105" y="506"/><use href="#plus" x="105" y="524"/><use href="#plus" x="105" y="542"/>
<use href="#cb" x="31" y="342"/><use href="#cb" x="123" y="414"/><use href="#cb" x="123" y="432"/><use href="#cb" x="123" y="468"/><use href="#cb" x="123" y="486"/><use href="#cb" x="123" y="504"/><use href="#cb" x="123" y="522"/>

<g transform="translate(36,146)" stroke="#111"><path d="M-10 3L0-2 10 3 0 8z" fill="#c89a30"/><path d="M-7 0L0-4 7 0 0 4z" fill="#e8c050"/><path d="M-4-3L0-7 4-3 0-1z" fill="#8a6a20"/></g>
<g transform="translate(58,163)"><rect x="-7" y="-8" width="14" height="16" fill="#eee" stroke="#222"/><rect x="-7" y="2" width="14" height="6" fill="#555"/><path d="M-1-8V2M-5-4h3" stroke="#222"/><rect x="2" y="-5" width="5" height="5" fill="#2c2" stroke="#111"/></g>
<use href="#wp" x="59" y="181"/>
<use href="#stk" x="59" y="199"/>
<use href="#sol" x="59" y="218"/>
<use href="#stk" x="75" y="235"/>
<g transform="translate(58,253)" fill="none"><path d="M-5-5L5 5" stroke="#333" stroke-width="3.500"/><path d="M-5-5L5 5" stroke="#e4e4e4" stroke-width="1.500"/><circle cx="-5" cy="-5" r="3" fill="#e4e4e4" stroke="#333"/><circle cx="5" cy="5" r="3" fill="#e4e4e4" stroke="#333"/></g>
<g transform="translate(36,271)"><rect x="-8" y="-8" width="16" height="16" fill="#eef" stroke="#003"/><path d="M-4-5h3M-4-1h3M-4 3h3" stroke="#003"/><rect x="1" y="-3" width="5" height="10" fill="#777"/><rect x="1" y="-7" width="5" height="4" fill="#2a2"/></g>
<g transform="translate(36,289)"><rect x="-8" y="-7" width="16" height="14" fill="#fff" stroke="#e11"/><path d="M-6-4H6M-6-1H6M-6 2H6M-6 5H6" stroke="#11c"/></g>
<g transform="translate(36,307)"><path d="M-8-2l4-4H8L4-2z" fill="#2a2" stroke="#111"/><path d="M4-2L8-6V4L4 8z" fill="#e8a520" stroke="#111"/><path d="M-8-2H4V8H-8z" fill="#f0c34a" stroke="#111"/></g>
<use href="#hat" x="36" y="325"/>
<use href="#fold" x="52" y="344"/>
<use href="#hat" x="59" y="360"/>
<use href="#wp" x="82" y="378"/>
<use href="#tool" x="99" y="396"/><use href="#tool" x="99" y="451"/>
<g transform="translate(141,414)"><ellipse cx="-1" cy="5" rx="6" ry="3" fill="#e0a52f" stroke="#222"/><path d="M-4 4L5-3" stroke="#2d8a2d" stroke-width="4"/><circle cx="6" cy="-5" r="2.500" fill="#2a2" stroke="#222"/><path d="M-6-7h3M-6-4h3" stroke="#222"/></g>
<g transform="translate(144,432)"><path d="M-9-2L0-8 9-3V8H-9z" fill="#f0c34a" stroke="#222"/><path d="M-5 7V0h4v7zM0 7V0h4v7z" fill="#22aa22" stroke="#111" stroke-width=".6"/></g>
<use href="#grn" x="144" y="468"/><use href="#grn" x="144" y="486"/><use href="#grn" x="144" y="504"/><use href="#grn" x="144" y="522"/><use href="#grn" x="144" y="540"/>

<!-- triads -->
<g font-family="Liberation Sans" font-size="12">
<g id="tr"><path d="M777 523V499" stroke="#0000cc" stroke-width="4"/><path d="M777 492l5 10h-10z" fill="#0000dd"/><path d="M781 523l1-22" stroke="#00dd00" stroke-width="2"/><path d="M778 524h30" stroke="#e01010" stroke-width="3"/><path d="M806 520l14 4-14 3z" fill="#e01010"/></g>
<text x="772" y="492" fill="#1010c0">Z</text><text x="780" y="492" fill="#10c010">Y</text><text x="823" y="529" fill="#e01010">X</text><text x="779" y="535" fill="#4a4a00" font-size="11">1-1</text>
<g transform="translate(-335,150)"><path d="M777 523V499" stroke="#0000cc" stroke-width="4"/><path d="M777 492l5 10h-10z" fill="#0000dd"/><path d="M781 523l1-22" stroke="#00dd00" stroke-width="2"/><path d="M778 524h30" stroke="#e01010" stroke-width="3"/><path d="M806 520l14 4-14 3z" fill="#e01010"/></g>
<text x="436" y="641" fill="#1010c0">Z</text><text x="445" y="642" fill="#10c010">Y</text><text x="486" y="680" fill="#e01010">X</text>
</g>

<!-- window icons -->
<use href="#sc" x="1138" y="13"/>
<path d="M1152 108l3 4 5-8" fill="none" stroke="#2f4f9f" stroke-width="2"/>
<g stroke="#888"><path d="M1171 254v3M1188 254v3M1205 254v3M1222 254v3M1239 254v3M1255 254v3M1272 254v3M1289 254v3M1305 254v3M1322 254v6"/></g>
<g fill="#111"><path d="M1162 312h1v12h-1zM1165 312h1v12h-1zM1167 312l11 6-11 6z"/><path d="M1194 312l11 6-11 6z"/><rect x="1228" y="314" width="2.500" height="7" fill="#aaa"/><rect x="1232" y="314" width="2.500" height="7" fill="#aaa"/><path d="M1255 312l10 6-10 6zM1265 312h3v12h-3z"/><path d="M1286 312l10 6-10 6zM1298 312h1v12h-1zM1301 312h1v12h-1z"/><path d="M1324 312l6 8h-12zM1319 322h11v2h-11z"/></g>
<path d="M1354 644l5-5M1357 644l3-3M1351 644l8-8" stroke="#aaa"/>

<!-- bottom nav -->
<g fill="#8c8c8c" stroke="#8c8c8c"><path d="M7 735v9M14 735l-5 4.500 5 4.500z"/><path d="M29 735l-5 4.500 5 4.500z"/><path d="M41 735l5 4.500-5 4.500z"/><path d="M56 735l5 4.500-5 4.500zM63 735v9"/></g>
<path d="M1274 760h7l-3.500-4z" fill="#333"/>
<g transform="translate(1355,758)"><path d="M-8-1l5-5 10 3 1 4-5 5-10-3z" fill="#eee" stroke="#333"/><path d="M-2-3l4 1" stroke="#333"/></g>
</svg>
</body></html>
